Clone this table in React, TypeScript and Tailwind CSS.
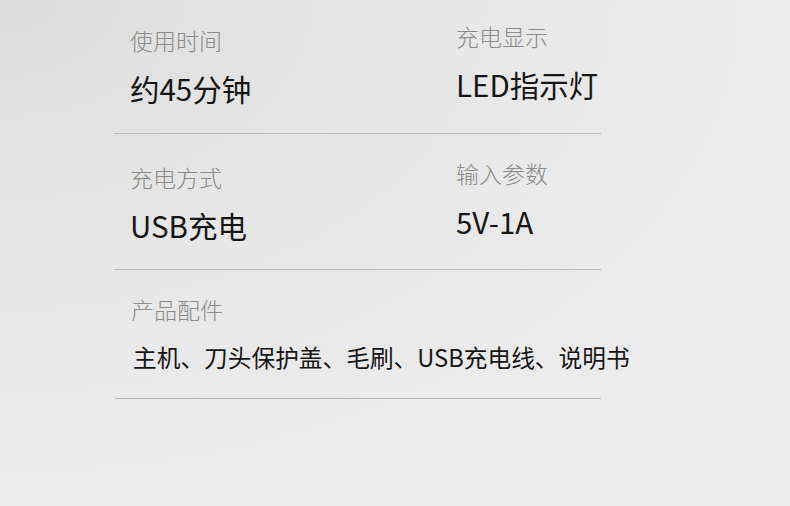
const specs = [
  [
    { label: '使用时间', value: '约45分钟' },
    { label: '充电显示', value: 'LED指示灯' },
  ],
  [
    { label: '充电方式', value: 'USB充电' },
    { label: '输入参数', value: '5V-1A' },
  ],
];

const font = { fontFamily: '"Noto Sans CJK SC", "Noto Sans", sans-serif' };

export default function App() {
  return (
    <div
      className="w-[790px] h-[506px] overflow-hidden bg-[radial-gradient(ellipse_at_top_left,#dcdcdc_0%,#e6e6e6_35%,#ebebeb_70%)]"
      style={font}
    >
      <div className="ml-[115px] w-[486px]">
        {specs.map((row, i) => (
          <div
            key={i}
            className={`flex border-b border-[#b9b9b9] pl-[15px] ${i === 0 ? 'pt-[24px] h-[134px]' : 'pt-[27px] h-[136px]'}`}
          >
            {row.map((cell, j) => (
              <div key={j} className={j === 0 ? 'w-[326px] shrink-0' : '-mt-1 whitespace-nowrap'}>
                <div className="text-[23px] leading-[32px] text-[#8c8c8c] font-light">{cell.label}</div>
                <div className="mt-[16px] text-[29.5px] leading-[32px] text-[#161616]">{cell.value}</div>
              </div>
            ))}
          </div>
        ))}
        <div className="pl-4 pt-[23px] h-[129px] border-b border-[#b9b9b9]">
          <div className="text-[23px] leading-[32px] text-[#8c8c8c] font-light">产品配件</div>
          <div className="mt-[16px] ml-[2px] whitespace-nowrap text-[23.7px] leading-[32px] text-[#161616]">
            主机、刀头保护盖、毛刷、USB充电线、说明书
          </div>
        </div>
      </div>
    </div>
  );
}
